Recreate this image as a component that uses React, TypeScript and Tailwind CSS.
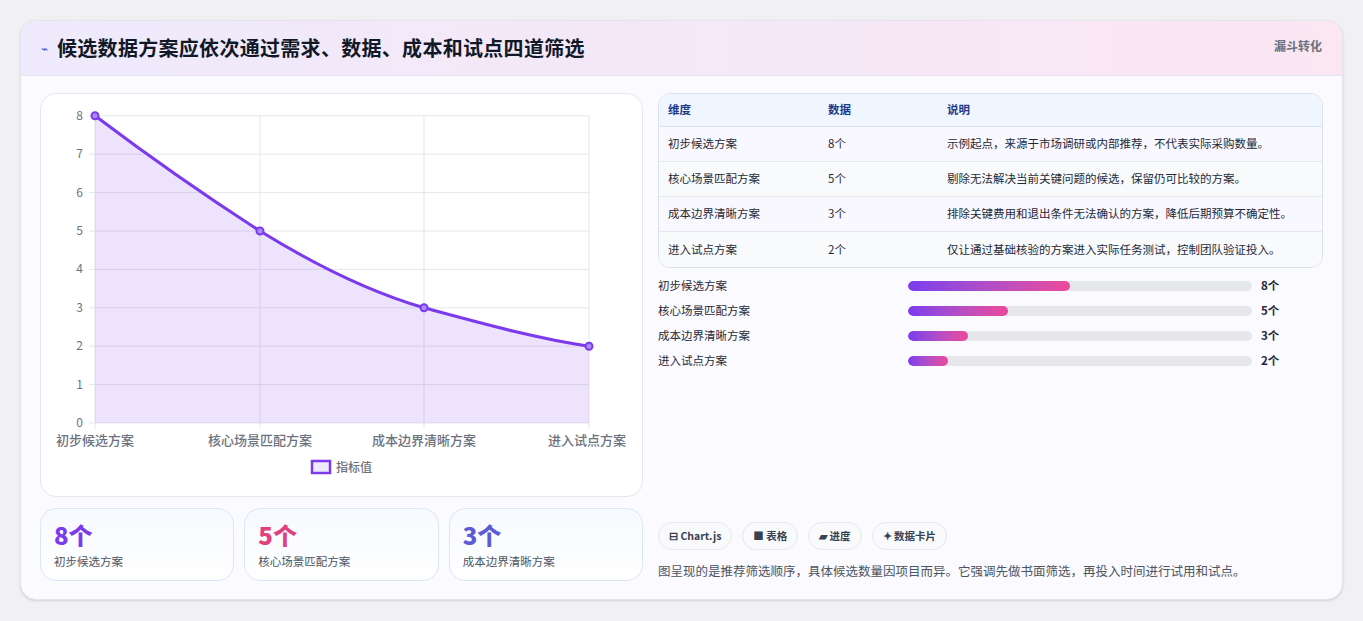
const F = { fontFamily: '"Noto Sans CJK SC", "Noto Sans", sans-serif' };

const rows = [
  { name: "初步候选方案", v: "8个", note: "示例起点，来源于市场调研或内部推荐，不代表实际采购数量。", w: 162 },
  { name: "核心场景匹配方案", v: "5个", note: "剔除无法解决当前关键问题的候选，保留仍可比较的方案。", w: 100 },
  { name: "成本边界清晰方案", v: "3个", note: "排除关键费用和退出条件无法确认的方案，降低后期预算不确定性。", w: 60 },
  { name: "进入试点方案", v: "2个", note: "仅让通过基础核验的方案进入实际任务测试，控制团队验证投入。", w: 40 },
];

function Chart() {
  const xs = [54, 219, 383, 548];
  const yOf = (v: number) => 329 - v * 38.4;
  const line = `M54,${yOf(8)} C110,${yOf(6.9)} 165,${yOf(5.9)} 219,${yOf(5)} C275,${yOf(4.1)} 330,${yOf(3.4)} 383,${yOf(3)} C440,${yOf(2.6)} 495,${yOf(2.2)} 548,${yOf(2)}`;
  return (
    <svg width="602" height="402" className="block">
      {[0, 1, 2, 3, 4, 5, 6, 7, 8].map((v) => (
        <g key={v}>
          <line x1="48" x2="548" y1={yOf(v)} y2={yOf(v)} stroke="#e5e7eb" />
          <text x="42" y={yOf(v) + 4} textAnchor="end" fontSize="12" fill="#6b7280" style={F}>{v}</text>
        </g>
      ))}
      {xs.map((x) => (
        <line key={x} x1={x} x2={x} y1="22" y2="335" stroke="#e5e7eb" />
      ))}
      <path d={`${line} L548,329 L54,329 Z`} fill="#7c3aed" fillOpacity="0.14" />
      <path d={line} fill="none" stroke="#7c3aed" strokeWidth="3" />
      {[8, 5, 3, 2].map((v, i) => (
        <circle key={i} cx={xs[i]} cy={yOf(v)} r="3.5" fill="#a78bfa" stroke="#7c3aed" strokeWidth="2" />
      ))}
      {rows.map((r, i) => (
        <text key={i} x={i === 3 ? 546 : xs[i]} y="351" textAnchor="middle" fontSize="13" fontWeight="500" fill="#6b7280" style={F}>{r.name}</text>
      ))}
      <rect x="271" y="367" width="18" height="12" fill="#ede9fe" stroke="#7c3aed" strokeWidth="2.5" />
      <text x="295" y="378" fontSize="12" fontWeight="500" fill="#6b7280" style={F}>指标值</text>
    </svg>
  );
}

export default function App() {
  return (
    <div className="min-h-screen bg-[#f1f1f4] pt-5 px-5 pb-5" style={F}>
      <div className="rounded-2xl bg-[#fbfaff] border border-[#e5e3f0] overflow-hidden shadow-sm">
        <div className="h-[55px] flex items-center justify-between px-5 bg-gradient-to-r from-[#eeeafc] to-[#fbe6f2] border-b border-[#e6e2f3]">
          <div className="flex items-center gap-[9px]">
            <span className="text-[#3b5bdb] text-[12px]">⌁</span>
            <span className="text-[20px] font-bold text-[#111827] tracking-[0.3px]">候选数据方案应依次通过需求、数据、成本和试点四道筛选</span>
          </div>
          <span className="text-[12px] font-bold text-[#6b7280] self-start mt-4">漏斗转化</span>
        </div>
        <div className="flex gap-[15px] px-[19px] pt-[17px] pb-[18px]">
          <div className="w-[603px] flex flex-col gap-[11px]">
            <div className="h-[404px] rounded-2xl border border-[#e5e7f0] bg-white">
              <Chart />
            </div>
            <div className="grid grid-cols-3 gap-[10px]">
              {[
                { v: "8个", c: "text-[#7c3aed]", n: "初步候选方案" },
                { v: "5个", c: "text-[#e0407e]", n: "核心场景匹配方案" },
                { v: "3个", c: "text-[#5b5bd6]", n: "成本边界清晰方案" },
              ].map((s) => (
                <div key={s.v} className="h-[73px] rounded-2xl border border-[#dbe7f5] bg-gradient-to-b from-[#f6f9fe] to-white px-[13px] pt-[11px]">
                  <div className={`text-[24px] font-extrabold leading-[30px] ${s.c}`}>{s.v}</div>
                  <div className="text-[11.5px] text-[#4b5563] mt-[3px]">{s.n}</div>
                </div>
              ))}
            </div>
          </div>
          <div className="flex-1 flex flex-col">
            <div className="rounded-xl border border-[#d9e2ef] overflow-hidden bg-white">
              <div className="flex h-[33px] items-center bg-[#eff6ff] border-b border-[#d9e2ef] text-[11.5px] font-bold text-[#1e3a8a] px-[9px]">
                <span className="w-[160px]">维度</span><span className="w-[119px]">数据</span><span>说明</span>
              </div>
              {rows.map((r, i) => (
                <div key={r.name} className={`flex h-[35px] items-center text-[11.5px] text-[#1f2937] px-[9px] ${i % 2 ? "bg-[#f8fafc]" : "bg-[#faf8ff]"} ${i < 3 ? "border-b border-[#e5e7eb]" : ""}`}>
                  <span className="w-[160px]">{r.name}</span><span className="w-[119px]">{r.v}</span><span>{r.note}</span>
                </div>
              ))}
            </div>
            <div className="mt-[11px] flex flex-col gap-[11px]">
              {rows.map((r) => (
                <div key={r.name} className="flex items-center h-[14px] text-[11.5px]">
                  <span className="w-[250px] text-[#1f2937]">{r.name}</span>
                  <div className="w-[344px] h-[10px] rounded-full bg-[#e5e7eb] overflow-hidden">
                    <div className="h-full rounded-full bg-gradient-to-r from-[#7c3aed] to-[#ec4899]" style={{ width: r.w }} />
                  </div>
                  <span className="ml-[9px] font-bold text-[#1f2937]">{r.v}</span>
                </div>
              ))}
            </div>
            <div className="flex-1" />
            <div className="flex gap-[10px] text-[10.5px] font-bold text-[#374151]">
              {["⊟ Chart.js", "■ 表格", "▰ 进度", "✦ 数据卡片"].map((t) => (
                <span key={t} className="h-[28px] px-[10px] flex items-center rounded-full border border-[#e5e7eb] bg-[#f8fafc]">{t}</span>
              ))}
            </div>
            <p className="mt-[12px] text-[12.5px] text-[#4b5563]">图呈现的是推荐筛选顺序，具体候选数量因项目而异。它强调先做书面筛选，再投入时间进行试用和试点。</p>
          </div>
        </div>
      </div>
    </div>
  );
}
